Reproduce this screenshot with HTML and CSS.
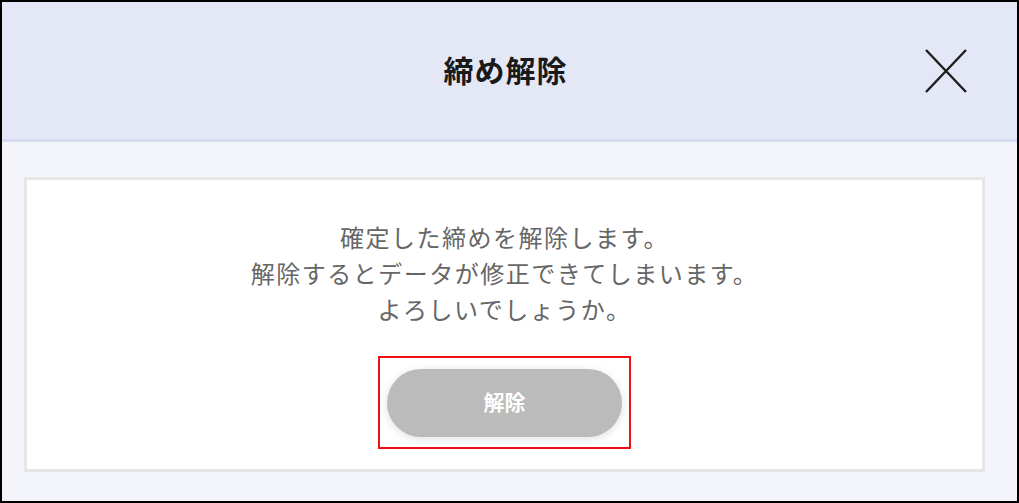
FILE: index.html
```html
<!DOCTYPE html>
<html lang="ja">
<head>
    <meta charset="UTF-8">
    <meta name="viewport" content="width=device-width, initial-scale=1.0">
    <title>締め解除</title>
    <link rel="stylesheet" href="styles.css">
</head>
<body>

<div class="modal">
    <div class="modal-header">
        <span></span>
        <h1 class="modal-title">締め解除</h1>
        <button class="close-button" aria-label="閉じる">
            <svg width="42" height="44" viewBox="0 0 42 44">
                <path d="M1 1 L41 43 M41 1 L1 43" stroke="#1e1e1e" stroke-width="2.4" fill="none"/>
            </svg>
        </button>
    </div>

    <div class="modal-body">
        <div class="confirm-box">
            <p class="confirm-text">
                確定した締めを解除します。<br>
                解除するとデータが修正できてしまいます。<br>
                よろしいでしょうか。
            </p>
            <!-- 赤枠は注記用 -->
            <div class="highlight">
                <button class="release-button">解除</button>
            </div>
        </div>
    </div>
</div>

</body>
</html>
```

FILE: styles.css
```css
body {
    font-family: "Noto Sans CJK JP", "Noto Sans", sans-serif;
    margin: 0;
    padding: 0;
    background-color: #000;
}
.modal {
    width: 1019px;
    height: 503px;
    box-sizing: border-box;
    border: 2px solid #000;
    display: flex;
    flex-direction: column;
    background-color: #f4f5fa;
}
.modal-header {
    height: 137px;
    flex-shrink: 0;
    background-color: #e4e7f5;
    border-bottom: 3px solid #d6daf1;
    display: grid;
    grid-template-columns: 1fr auto 1fr;
    align-items: center;
    padding: 0 50px 0 42px;
}
.modal-title {
    margin: 0 0 3px 0;
    font-size: 30px;
    font-weight: bold;
    color: #1a1a1a;
    letter-spacing: 1px;
}
.close-button {
    justify-self: end;
    background: none;
    border: none;
    padding: 0;
    width: 42px;
    height: 44px;
    cursor: pointer;
    display: flex;
}
.modal-body {
    flex: 1;
    padding: 35px 32px 29px 22px;
    display: flex;
}
.confirm-box {
    flex: 1;
    background-color: #fff;
    border: 3px solid #e6e6e6;
    display: flex;
    flex-direction: column;
    align-items: center;
    padding-top: 39px;
}
.confirm-text {
    margin: 0;
    font-size: 24px;
    line-height: 36px;
    letter-spacing: 1.5px;
    color: #666;
    text-align: center;
}
.highlight {
    margin-top: 29px;
    border: 2px solid #ee1111;
    padding: 11px 7px 10px 7px;
}
.release-button {
    display: block;
    width: 235px;
    height: 68px;
    border: none;
    border-radius: 34px;
    background-color: #bbbbbb;
    color: #fff;
    font-family: inherit;
    font-size: 21px;
    font-weight: bold;
    line-height: 1;
    padding: 0 0 4px 0;
    box-shadow: 0 2px 10px rgba(0, 0, 0, 0.12);
    cursor: pointer;
}
```
